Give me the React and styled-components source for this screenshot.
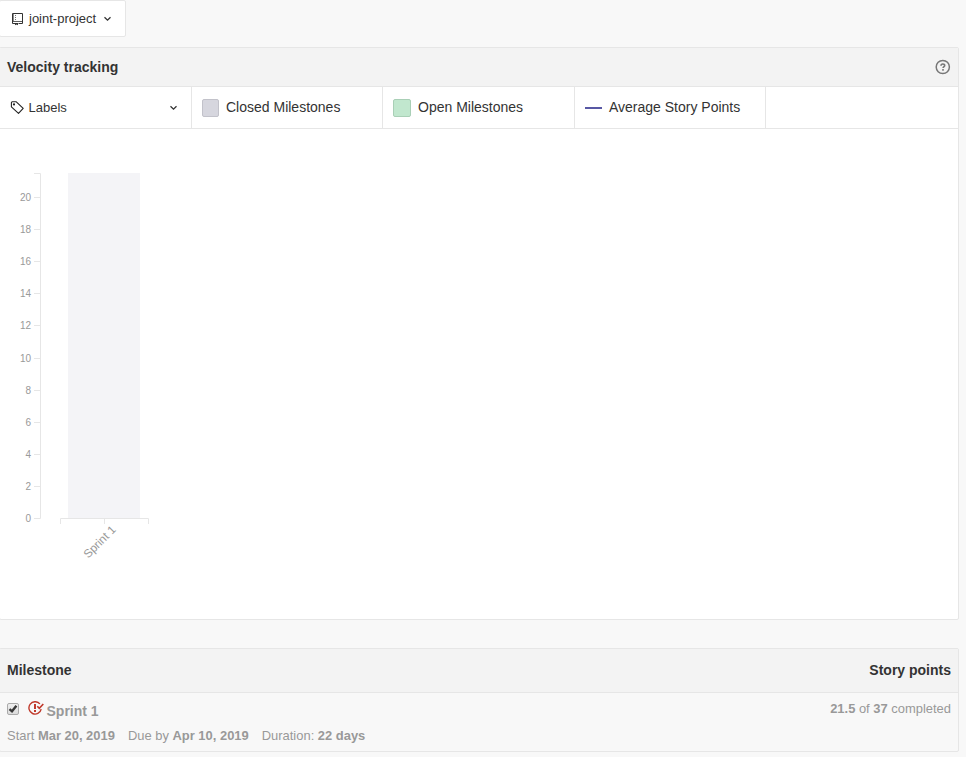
import React, { useState } from "react";
import styled, { createGlobalStyle } from "styled-components";

const line = "#e6e6e6";

const GlobalStyle = createGlobalStyle`
  * { box-sizing: border-box; }
  body {
    margin: 0;
    background: #f8f8f8;
    color: #333;
    font-family: "Liberation Sans", Arial, sans-serif;
    font-size: 13px;
    overflow: hidden;
  }
`;

const Page = styled.main`
  width: 959px;
  height: 757px;
  display: flex;
  flex-direction: column;
  align-items: flex-start;
`;

const RepoButton = styled.button`
  display: flex;
  align-items: center;
  width: 127px;
  height: 37px;
  margin: 0 0 10px -1px;
  padding: 0 0 0 12px;
  border: 1px solid ${line};
  border-radius: 2px;
  background: #fff;
  color: #333;
  font: inherit;
`;

const RepoName = styled.span`
  margin: 0 6.5px 0 5px;
`;

const Panel = styled.section`
  width: 960px;
  height: ${(p) => p.$height}px;
  margin: 0 0 ${(p) => p.$gap || 0}px -1px;
  border: 1px solid ${line};
  border-radius: 2px;
  background: ${(p) => p.$background};
  overflow: hidden;
`;

const PanelHeader = styled.header`
  display: flex;
  align-items: center;
  justify-content: space-between;
  height: ${(p) => p.$height}px;
  padding: 0 7px ${(p) => p.$lift || 0}px;
  border-bottom: 1px solid ${line};
  background: #f3f3f3;
`;

const Heading = styled.h2`
  margin: 0;
  font-size: 14px;
  line-height: 20px;
  font-weight: bold;
`;

const Toolbar = styled.div`
  display: flex;
  height: 42px;
  border-bottom: 1px solid ${line};
`;

const Cell = styled.div`
  display: flex;
  align-items: center;
  width: ${(p) => p.$width}px;
  padding: 0 10px;
  border-right: 1px solid ${line};
  font-size: ${(p) => p.$size || 14}px;
`;

const LabelText = styled.span`
  flex: 1;
  margin-left: 3.5px;
`;

const LegendText = styled.span`
  margin-bottom: 2px;
`;

const Spacer = styled.span`
  width: 3px;
`;

const Swatch = styled.span`
  width: ${(p) => p.$width || 17}px;
  height: 18px;
  margin: 1px 7px 0 0;
  border: 1px solid ${(p) => p.$border};
  border-radius: 2px;
  background: ${(p) => p.$fill};
`;

const Dash = styled.span`
  width: 17px;
  height: 2px;
  margin: 1px 7px 0 0;
  background: #5858a4;
`;

const ChartSvg = styled.svg`
  display: block;
  text {
    fill: #999;
    font-family: "Liberation Sans", Arial, sans-serif;
  }
`;

const Row = styled.div`
  display: flex;
  justify-content: space-between;
  padding: 8px 7px 0;
  color: #999;
  font-size: 12.94px;
`;

const Title = styled.div`
  display: flex;
  height: 22px;
  font-size: 14px;
  font-weight: bold;
`;

const TitleText = styled.span`
  margin: 2px 0 0 2.5px;
  line-height: 17px;
`;

const CheckLabel = styled.label`
  display: grid;
  width: 12px;
  height: 12px;
  margin: 2px 9px 0 0;
  > * { grid-area: 1 / 1; }
`;

const CheckInput = styled.input`
  appearance: none;
  width: 12px;
  height: 12px;
  margin: 0;
  border: 1px solid #aaa;
  border-radius: 2px;
  background: linear-gradient(#eee, #dcdcdc);
`;

const CheckMark = styled.svg`
  pointer-events: none;
`;

const Dates = styled.div`
  display: flex;
  gap: 13px;
  margin-top: 5px;
  line-height: 15px;
`;

const Points = styled.div`
  line-height: 15px;
`;

const RepoIcon = () => (
  <svg width="12" height="14" viewBox="0 0 12 14" fill="none" stroke="#333">
    <path d="M1 1.5h9.5v10H6.5M3 11.5H.5V1.5H1" />
    <path d="M1 9.5h9.5" strokeWidth=".8" />
    <path d="M1.3 2v7" strokeWidth=".7" />
    <path d="M3.5 3v5" strokeDasharray="1 1" opacity=".7" />
    <path d="M3 11h3v2.2L4.5 12.4 3 13.2z" fill="#333" stroke="none" />
  </svg>
);

const ChevronIcon = () => (
  <svg width="9" height="8" viewBox="0 0 9 8" fill="none" stroke="#333" strokeWidth="1.3">
    <path d="M1.5 2.3 4.5 5.2 7.5 2.3" />
  </svg>
);

const TagIcon = () => (
  <svg width="15" height="14" viewBox="0 0 15 14" fill="none" stroke="#222" strokeWidth="1.1" strokeLinejoin="round">
    <path d="M2 .8h4.3l6.9 6.6-4.7 4.9-7.1-6.5V1.5z" />
    <circle cx="4" cy="3.4" r="1.1" fill="#222" stroke="none" />
  </svg>
);

const HelpButton = styled.button`
  display: flex;
  width: 16px;
  height: 16px;
  margin: 0;
  padding: 0;
  border: 0;
  background: none;
`;

const HelpIcon = () => (
  <svg width="16" height="16" viewBox="0 0 16 16" fill="none" stroke="#777">
    <circle cx="7.8" cy="8" r="6.6" strokeWidth="1.5" />
    <path d="M6 6.7C6 5.5 6.8 5 7.8 5s1.9.5 1.9 1.4c0 1.2-1.6 1.2-1.6 2.6" strokeWidth="1.6" />
    <path d="M7.2 10H8.8v1.7H7.2z" fill="#777" stroke="none" />
  </svg>
);

const OverdueIcon = () => (
  <svg width="16" height="16" viewBox="0 0 16 16" fill="none" stroke="#c0392b">
    <path d="M11.9 2.9A6.2 6.2 0 1 0 13.2 8.2" strokeWidth="1.4" />
    <path d="M9.3 5.2l2 2.1 4-4.3" strokeWidth="1.6" />
    <path d="M6 3h2v5H6zM6 9h2v2H6z" fill="#c0392b" stroke="none" />
  </svg>
);

const ticks = [0, 2, 4, 6, 8, 10, 12, 14, 16, 18, 20];
const tickY = (value) => Math.round(389 - (value * 345) / 21.5);

function VelocityChart() {
  return (
    <ChartSvg width="958" height="490" viewBox="0 0 958 490">
      <rect x="68" y="44" width="72" height="345" fill="#f4f4f7" />
      <path d="M34 44.5h6.5v345H34" fill="none" stroke="#e6e6e6" />
      {ticks.map((value) => (
        <g key={value}>
          <path d={`M34 ${tickY(value) + 0.5}h6`} stroke="#e6e6e6" />
          <text x="31" y={tickY(value) + 4} fontSize="10" textAnchor="end">{value}</text>
        </g>
      ))}
      <path d="M60.5 395v-5.5h88v5.5M104.5 389.5v5.5" fill="none" stroke="#e6e6e6" />
      <text transform="translate(116.5 401.5) rotate(-45)" fontSize="11.6" textAnchor="end">Sprint 1</text>
    </ChartSvg>
  );
}

export default function App() {
  const [checked, setChecked] = useState(true);
  return (
    <>
      <GlobalStyle />
      <Page>
        <RepoButton>
          <RepoIcon />
          <RepoName>joint-project</RepoName>
          <ChevronIcon />
        </RepoButton>

        <Panel $height={573} $gap={28} $background="#fff">
          <PanelHeader $height={39}>
            <Heading>Velocity tracking</Heading>
            <HelpButton aria-label="Help"><HelpIcon /></HelpButton>
          </PanelHeader>
          <Toolbar>
            <Cell $width={192} $size={13}>
              <TagIcon />
              <LabelText>Labels</LabelText>
              <ChevronIcon />
              <Spacer />
            </Cell>
            <Cell $width={191}>
              <Swatch $fill="#d6d6de" $border="#c2c2ca" />
              <LegendText>Closed Milestones</LegendText>
            </Cell>
            <Cell $width={192}>
              <Swatch $width={18} $fill="#c1e7ce" $border="#a9cfb6" />
              <LegendText>Open Milestones</LegendText>
            </Cell>
            <Cell $width={191}>
              <Dash />
              <LegendText>Average Story Points</LegendText>
            </Cell>
          </Toolbar>
          <VelocityChart />
        </Panel>

        <Panel $height={104} $background="#f8f8f8">
          <PanelHeader $height={44} $lift={1}>
            <Heading>Milestone</Heading>
            <Heading>Story points</Heading>
          </PanelHeader>
          <Row>
            <div>
              <Title>
                <CheckLabel>
                  <CheckInput
                    type="checkbox"
                    aria-label="Sprint 1"
                    checked={checked}
                    onChange={(e) => setChecked(e.target.checked)}
                  />
                  {checked && (
                    <CheckMark width="12" height="12" viewBox="0 0 12 12" fill="none" stroke="#383838" strokeWidth="2.4">
                      <path d="M2.5 6.1 5 8.3 9.4 2.8" />
                    </CheckMark>
                  )}
                </CheckLabel>
                <OverdueIcon />
                <TitleText>Sprint 1</TitleText>
              </Title>
              <Dates>
                <span>Start <b>Mar 20, 2019</b></span>
                <span>Due by <b>Apr 10, 2019</b></span>
                <span>Duration: <b>22 days</b></span>
              </Dates>
            </div>
            <Points><b>21.5</b> of <b>37</b> completed</Points>
          </Row>
        </Panel>
      </Page>
    </>
  );
}
